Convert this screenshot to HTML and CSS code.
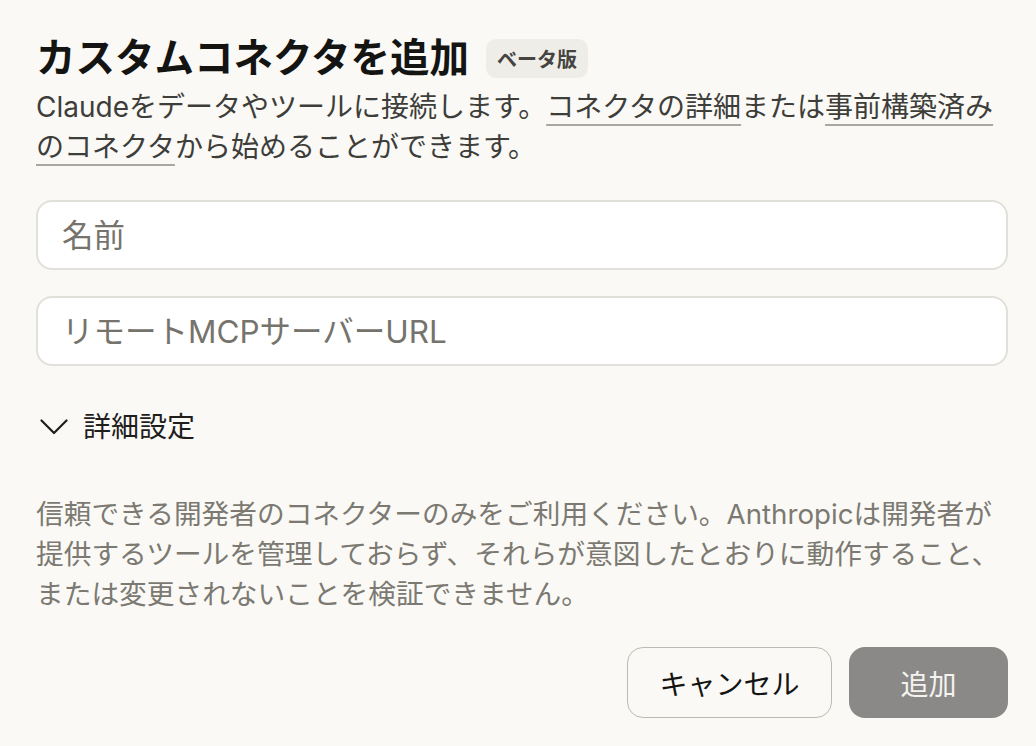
FILE: index.html
```html
<!DOCTYPE html>
<html lang="ja">
<head>
<meta charset="utf-8">
<title>カスタムコネクタを追加</title>
<link rel="stylesheet" href="styles.css">
</head>
<body>
<div class="dialog">
  <div class="header">
    <h1 class="title">カスタムコネクタを追加</h1>
    <span class="badge">ベータ版</span>
  </div>
  <p class="desc"><span>Claudeをデータやツールに接続します。</span><a class="link" href="#">コネクタの詳細</a><span>または</span><a class="link" href="#">事前構築済み</a><br><a class="link" href="#">のコネクタ</a><span>から始めることができます。</span></p>

  <div class="fields">
    <input class="field" type="text" placeholder="名前">
    <input class="field" type="text" placeholder="リモートMCPサーバーURL">
  </div>

  <div class="advanced">
    <svg class="chev" width="28" height="16" viewBox="0 0 28 16" aria-hidden="true">
      <path d="M1.5 1.5 L14 14 L26.5 1.5" fill="none" stroke="#1f1e1d" stroke-width="2.2" stroke-linecap="round" stroke-linejoin="round"/>
    </svg>
    <span class="adv-label">詳細設定</span>
  </div>

  <p class="note">信頼できる開発者のコネクターのみをご利用ください。Anthropicは開発者が提供するツールを管理しておらず、それらが意図したとおりに動作すること、または変更されないことを検証できません。</p>

  <div class="actions">
    <button class="btn btn-cancel" type="button">キャンセル</button>
    <button class="btn btn-add" type="button">追加</button>
  </div>
</div>
</body>
</html>
```
FILE: styles.css
```css
* { box-sizing: border-box; }
html, body { margin: 0; padding: 0; }
body {
  background: #faf9f5;
  font-family: "Inter", "Noto Sans CJK JP", sans-serif;
  color: #141413;
}
.dialog {
  padding: 29px 28px 0 36px;
  display: flex;
  flex-direction: column;
}
.header {
  display: flex;
  align-items: center;
  gap: 17px;
}
.title {
  margin: 0;
  font-size: 39.5px;
  line-height: 58px;
  font-weight: 700;
  color: #141413;
}
.badge {
  display: inline-flex;
  align-items: center;
  justify-content: center;
  width: 102px;
  height: 39px;
  border-radius: 10px;
  background: #efede8;
  color: #454440;
  font-size: 20px;
  font-weight: 700;
}
.desc {
  margin: 0;
  font-size: 28px;
  line-height: 40px;
  color: #3d3d3a;
}
.link {
  color: inherit;
  text-decoration: underline;
  text-decoration-color: #a9a7a0;
  text-decoration-thickness: 2px;
  text-underline-offset: 7px;
}
.fields {
  margin-top: 33px;
  display: flex;
  flex-direction: column;
  gap: 26px;
}
.field {
  display: block;
  width: 100%;
  height: 70px;
  border: 2px solid #e2e0db;
  border-radius: 16px;
  background: #ffffff;
  padding: 0 24px;
  font-family: "Inter", "Noto Sans CJK JP", sans-serif;
  font-size: 31.5px;
  color: #141413;
  outline: none;
}
.field::placeholder { color: #75736c; opacity: 1; }
.advanced {
  margin-top: 41px;
  display: flex;
  align-items: center;
  gap: 15px;
  padding-left: 4px;
  height: 40px;
}
.chev { display: block; }
.adv-label {
  font-size: 28px;
  line-height: 40px;
  color: #1f1e1d;
}
.note {
  margin: 47px 0 0;
  font-size: 27.7px;
  line-height: 40px;
  color: #7b7972;
}
.actions {
  margin-top: 33px;
  display: flex;
  justify-content: flex-end;
  gap: 17px;
}
.btn {
  height: 71px;
  border-radius: 16px;
  font-family: "Inter", "Noto Sans CJK JP", sans-serif;
  font-size: 28px;
  padding: 0;
  cursor: pointer;
}
.btn-cancel {
  width: 205px;
  background: #faf9f5;
  border: 1px solid #bcbab3;
  color: #141413;
}
.btn-add {
  width: 159px;
  background: #8a8987;
  border: none;
  color: #f4f3ef;
}
```
